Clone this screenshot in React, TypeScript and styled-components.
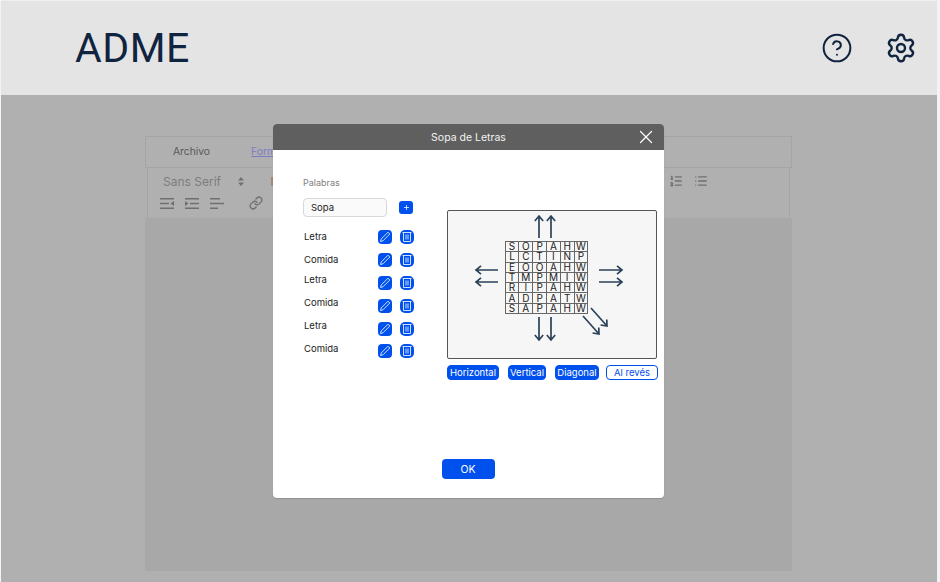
import React from 'react'
import styled, { createGlobalStyle } from 'styled-components'
import { CircleHelp, Settings, X, Link, List, ListOrdered, Plus } from 'lucide-react'

const GlobalStyle = createGlobalStyle`
    html, body {
        margin: 0;
        padding: 0;
        background: #f3f3f3;
    }
    body {
        font-family: 'Inter', 'Liberation Sans', sans-serif;
    }
`

const Page = styled.div`
    position: relative;
    width: 936px;
    height: 582px;
    margin-left: 1px;
    display: flex;
    flex-direction: column;
    overflow: hidden;
    background: #b0b0b0;
`

const Header = styled.header`
    height: 95px;
    box-sizing: border-box;
    flex-shrink: 0;
    display: flex;
    align-items: center;
    justify-content: space-between;
    padding: 0 20px 0 74px;
    background: #e4e4e4;
    border-top: 1px solid #f0f0f0;
`

const Logo = styled.div`
    font-family: 'Roboto', sans-serif;
    font-size: 41px;
    line-height: 1;
    letter-spacing: 0.5px;
    color: #10233f;
`

const HeaderIcons = styled.div`
    display: flex;
    align-items: center;
    gap: 32px;
    color: #10233f;
`

const Main = styled.main`
    flex: 1;
    display: flex;
    padding: 41px 145px 11px 144px;
`

const Editor = styled.section`
    flex: 1;
    display: flex;
    flex-direction: column;
`

const Tabs = styled.div`
    height: 32px;
    box-sizing: border-box;
    display: flex;
    align-items: center;
    gap: 41px;
    padding: 0 0 3px 27px;
    border: 1px solid #a5a5a5;
    font-size: 10.3px;
`

const Tab = styled.span<{ $active?: boolean }>`
    color: ${p => (p.$active ? '#7d7dc4' : '#5a5a5a')};
    text-decoration: ${p => (p.$active ? 'underline' : 'none')};
`

const Toolbar = styled.div`
    height: 50px;
    flex-shrink: 0;
    box-sizing: border-box;
    margin: 0 2px;
    padding: 2px 81px 0 12px;
    display: flex;
    flex-direction: column;
    border-left: 1px solid #a5a5a5;
    border-right: 1px solid #a5a5a5;
    color: #6f6f6f;
`

const ToolRow = styled.div`
    height: 22px;
    display: flex;
    align-items: center;
    justify-content: space-between;
`

const ToolGroup = styled.div<{ $gap: number }>`
    display: flex;
    align-items: center;
    gap: ${p => p.$gap}px;
`

const FontSelect = styled.span`
    width: 64px;
    padding-left: 3px;
    font-size: 12px;
    color: #7d7d7d;
`

const ColorMark = styled.span`
    width: 4px;
    height: 9px;
    margin-left: 16px;
    background: #a68a6c;
`

const LinkSlot = styled.span`
    display: flex;
    margin-left: 14px;
`

const EditorBody = styled.div`
    flex: 1;
    background: #a8a8a8;
`

const Modal = styled.div`
    position: absolute;
    left: 272px;
    top: 124px;
    width: 391px;
    height: 374px;
    display: flex;
    flex-direction: column;
    background: #fff;
    border-radius: 4px;
    overflow: hidden;
    box-shadow: 0 1px 1px rgba(0, 0, 0, 0.15);
`

const ModalHead = styled.div`
    position: relative;
    height: 26px;
    flex-shrink: 0;
    display: flex;
    align-items: center;
    justify-content: center;
    background: #5f5f5f;
    color: #f2f2f2;
    font-size: 10.5px;
`

const CloseButton = styled.span`
    position: absolute;
    right: 7px;
    top: 2px;
    display: flex;
    color: #fff;
`

const ModalBody = styled.div`
    flex: 1;
    display: flex;
    padding: 26px 6px 0 30px;
`

const WordsColumn = styled.div`
    width: 144px;
    flex-shrink: 0;
`

const FieldLabel = styled.div`
    height: 13px;
    font-size: 9px;
    line-height: 13px;
    color: #808080;
`

const InputRow = styled.div`
    margin-top: 9px;
    display: flex;
    align-items: center;
    gap: 12px;
`

const TextInput = styled.div`
    width: 84px;
    height: 19px;
    box-sizing: border-box;
    display: flex;
    align-items: center;
    padding-left: 7px;
    font-size: 9.5px;
    color: #222;
    background: #fafafa;
    border: 1px solid #d8d8d8;
    border-radius: 4px;
`

const AddButton = styled.span`
    width: 14px;
    height: 13px;
    display: flex;
    align-items: center;
    justify-content: center;
    border-radius: 3px;
    background: #0050ee;
    color: #dfe9ff;
`

const WordList = styled.div`
    margin-top: 9px;
    width: 111px;
    display: flex;
    flex-direction: column;
`

const WordRow = styled.div`
    height: 22.8px;
    display: flex;
    align-items: center;
    gap: 8px;
`

const WordName = styled.span<{ $lift: number }>`
    flex: 1;
    padding-left: 1px;
    padding-bottom: ${p => p.$lift}px;
    font-size: 9.5px;
    color: #222;
`

const IconButton = styled.span<{ $radius: number }>`
    width: 14px;
    height: 14px;
    display: flex;
    align-items: center;
    justify-content: center;
    border-radius: ${p => p.$radius}px;
    background: #0050ee;
`

const PuzzleColumn = styled.div`
    flex: 1;
    padding-top: 34px;
`

const PuzzlePanel = styled.div`
    position: relative;
    width: 210px;
    height: 149px;
    box-sizing: border-box;
    display: flex;
    align-items: flex-start;
    justify-content: center;
    padding: 30px 11px 0 0;
    background: #f6f6f6;
    border: 1px solid #555;
    border-radius: 2px;
`

const Arrows = styled.svg`
    position: absolute;
    left: -1px;
    top: -1px;
`

const LetterGrid = styled.div`
    display: grid;
    grid-template-columns: repeat(6, 13.8px);
    grid-auto-rows: 10.3px;
    border-left: 1px solid #666;
    border-top: 1px solid #666;
`

const Cell = styled.span`
    box-sizing: border-box;
    display: flex;
    align-items: center;
    justify-content: center;
    border-right: 1px solid #666;
    border-bottom: 1px solid #666;
    font-size: 10px;
    line-height: 9px;
    color: #222;
`

const ModeRow = styled.div`
    margin-top: 6px;
    width: 211px;
    display: flex;
    gap: 9px;
`

const ModeButton = styled.span<{ $outline?: boolean; $width: number }>`
    width: ${p => p.$width}px;
    height: 15px;
    margin-left: ${p => (p.$outline ? '-2px' : '0')};
    box-sizing: border-box;
    display: flex;
    align-items: center;
    justify-content: center;
    font-size: 9.5px;
    border-radius: 4px;
    background: ${p => (p.$outline ? '#fff' : '#0050ee')};
    color: ${p => (p.$outline ? '#0050ee' : '#fff')};
    border: 1px solid #0050ee;
`

const ModalFoot = styled.div`
    height: 39px;
    flex-shrink: 0;
    display: flex;
    justify-content: center;
    padding-right: 1px;
`

const OkButton = styled.span`
    width: 53px;
    height: 20px;
    display: flex;
    align-items: center;
    justify-content: center;
    border-radius: 4px;
    background: #0050ee;
    color: #fff;
    font-size: 10.5px;
`

const letters = ['SOPAHW', 'LCTINP', 'EOOAHW', 'TMPMIW', 'RIPAHW', 'ADPATW', 'SAPAHW']
const words = [
    { name: 'Letra', lift: 2 },
    { name: 'Comida', lift: 2 },
    { name: 'Letra', lift: 7 },
    { name: 'Comida', lift: 7 },
    { name: 'Letra', lift: 7 },
    { name: 'Comida', lift: 5 },
]
// arrow shafts in panel coordinates: x1 y1 x2 y2, head at x2 y2
const arrows = [
    [92, 28, 92, 6],
    [104, 28, 104, 6],
    [92, 107, 92, 130],
    [104, 107, 104, 130],
    [51, 60, 29, 60],
    [51, 72, 29, 72],
    [152, 60, 175, 60],
    [152, 72, 175, 72],
    [144, 98, 160, 116],
    [136, 106, 152, 124],
]

const arrowHead = (x1: number, y1: number, x2: number, y2: number) => {
    const a = Math.atan2(y2 - y1, x2 - x1)
    const s = 6.5
    const p = (d: number) => `${x2 + s * Math.cos(a + d)} ${y2 + s * Math.sin(a + d)}`
    return `M${p(2.45)} L${x2} ${y2} L${p(-2.45)}`
}

const PencilIcon = () => (
    <svg width="14" height="14" viewBox="0 0 14 14" fill="none" stroke="#cfe0ff" strokeWidth="1">
        <path d="M2.5 11.5 L3.2 9 L10 2.2 L11.8 4 L5 10.8 Z" />
    </svg>
)

const TrashIcon = () => (
    <svg width="14" height="14" viewBox="0 0 14 14" fill="none" stroke="#cfe0ff" strokeWidth="1">
        <path d="M2.5 2.5 H11.5 M3.5 2.5 V11.5 H10.5 V2.5 M6 4.5 V9.5 M8 4.5 V9.5" />
    </svg>
)

const UpDownIcon = () => (
    <svg width="6" height="9" viewBox="0 0 6 9" fill="currentColor">
        <path d="M3 0 L6 3.5 H0 Z M3 9 L6 5.5 H0 Z" />
    </svg>
)

const IndentIcon = ({ flip }: { flip?: boolean }) => (
    <svg width="14" height="11" viewBox="0 0 14 11" fill="currentColor" style={{ transform: flip ? 'scaleX(-1)' : undefined }}>
        <path d="M0 0 H14 V1.5 H0 Z M5 4.7 H14 V6.2 H5 Z M0 9.4 H14 V10.9 H0 Z M0 3 L3.5 5.45 L0 7.9 Z" />
    </svg>
)

const AlignIcon = () => (
    <svg width="14" height="11" viewBox="0 0 14 11" fill="currentColor">
        <path d="M0 0 H10 V1.5 H0 Z M0 4.7 H14 V6.2 H0 Z M0 9.4 H8 V10.9 H0 Z" />
    </svg>
)

export default function App() {
    return (
        <Page>
            <GlobalStyle />
            <Header>
                <Logo>ADME</Logo>
                <HeaderIcons>
                    <CircleHelp size={32} strokeWidth={1.5} />
                    <Settings size={32} strokeWidth={1.8} />
                </HeaderIcons>
            </Header>
            <Main>
                <Editor>
                    <Tabs>
                        <Tab>Archivo</Tab>
                        <Tab $active>Formato</Tab>
                    </Tabs>
                    <Toolbar>
                        <ToolRow>
                            <ToolGroup $gap={11}>
                                <FontSelect>Sans Serif</FontSelect>
                                <UpDownIcon />
                                <ColorMark />
                            </ToolGroup>
                            <ToolGroup $gap={11}>
                                <ListOrdered size={14} strokeWidth={2.4} />
                                <List size={14} strokeWidth={2.4} />
                            </ToolGroup>
                        </ToolRow>
                        <ToolRow>
                            <ToolGroup $gap={11}>
                                <IndentIcon flip />
                                <IndentIcon />
                                <AlignIcon />
                                <LinkSlot>
                                    <Link size={14} strokeWidth={2.2} />
                                </LinkSlot>
                            </ToolGroup>
                        </ToolRow>
                    </Toolbar>
                    <EditorBody />
                </Editor>
            </Main>
            <Modal>
                <ModalHead>
                    Sopa de Letras
                    <CloseButton>
                        <X size={22} strokeWidth={1.3} />
                    </CloseButton>
                </ModalHead>
                <ModalBody>
                    <WordsColumn>
                        <FieldLabel>Palabras</FieldLabel>
                        <InputRow>
                            <TextInput>Sopa</TextInput>
                            <AddButton>
                                <Plus size={7} strokeWidth={3} />
                            </AddButton>
                        </InputRow>
                        <WordList>
                            {words.map((word, i) => (
                                <WordRow key={i}>
                                    <WordName $lift={word.lift}>{word.name}</WordName>
                                    <IconButton $radius={4}>
                                        <PencilIcon />
                                    </IconButton>
                                    <IconButton $radius={5}>
                                        <TrashIcon />
                                    </IconButton>
                                </WordRow>
                            ))}
                        </WordList>
                    </WordsColumn>
                    <PuzzleColumn>
                        <PuzzlePanel>
                            <LetterGrid>
                                {letters.map((row, r) =>
                                    row.split('').map((ch, c) => <Cell key={`${r}-${c}`}>{ch}</Cell>),
                                )}
                            </LetterGrid>
                            <Arrows width="210" height="149" viewBox="0 0 210 149" fill="none" stroke="#2b4259" strokeWidth="1.7">
                                {arrows.map(([x1, y1, x2, y2], i) => (
                                    <path key={i} d={`M${x1} ${y1} L${x2} ${y2} ${arrowHead(x1, y1, x2, y2)}`} />
                                ))}
                            </Arrows>
                        </PuzzlePanel>
                        <ModeRow>
                            <ModeButton $width={52}>Horizontal</ModeButton>
                            <ModeButton $width={38}>Vertical</ModeButton>
                            <ModeButton $width={44}>Diagonal</ModeButton>
                            <ModeButton $width={52} $outline>Al revés</ModeButton>
                        </ModeRow>
                    </PuzzleColumn>
                </ModalBody>
                <ModalFoot>
                    <OkButton>OK</OkButton>
                </ModalFoot>
            </Modal>
        </Page>
    )
}
